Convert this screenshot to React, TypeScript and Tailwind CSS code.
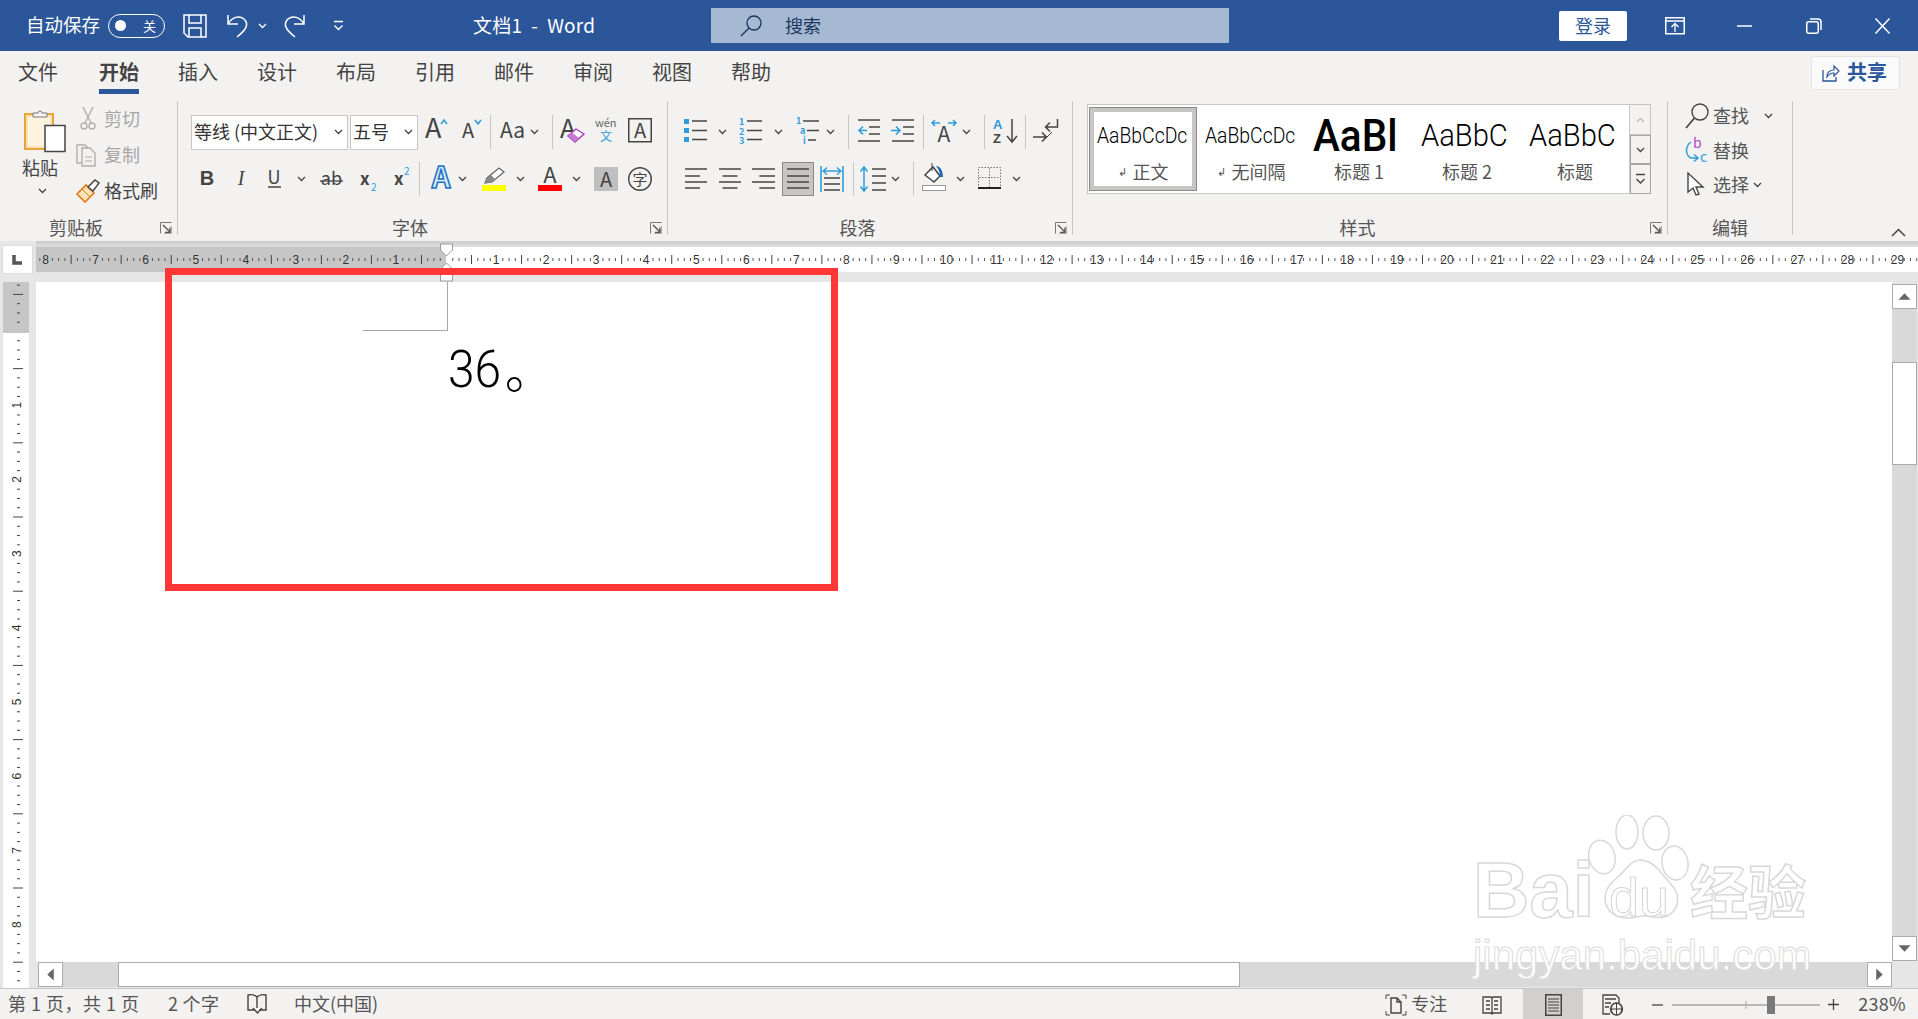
import React from "react";

const D = "#444444";
const B = "#2e9cdb";

const S = ({ w, h = 36, c = "", children }: any) => (
  <svg width={w} height={h} viewBox={`0 0 ${w} ${h}`} fill="none" className={`block shrink-0 overflow-visible ${c}`}>
    {children}
  </svg>
);
const T = ({ x = 0, y, s, f = D, a, b, i, fam, children, st, sw }: any) => (
  <text x={x} y={y} fontSize={s} fill={f} textAnchor={a} fontWeight={b ? 700 : 400} fontStyle={i ? "italic" : undefined} fontFamily={fam} stroke={st} strokeWidth={sw}>
    {children}
  </text>
);
const L = ({ x1, y1, x2, y2, c = D, w = 1.5 }: any) => <line x1={x1} y1={y1} x2={x2} y2={y2} stroke={c} strokeWidth={w} />;
const Chev = ({ c = "", col = D }: any) => (
  <S w={9} h={6} c={c}>
    <polyline points="1,1 4.5,4.5 8,1" stroke={col} strokeWidth="1.3" />
  </S>
);
const Sep = ({ c }: any) => <div className={`w-px h-[34px] bg-[#c8c6c4] shrink-0 ${c}`} />;
const Launcher = () => (
  <S w={12} h={12}>
    <path d="M.5 11.5V.5h11" stroke="#777" />
    <path d="M3 3l7 7M10 5.5V10.5H5" stroke="#555" strokeWidth="1.4" />
    <path d="M11.5 4v7.5H4" stroke="#aaa" />
  </S>
);

function Group({ w, label, launcher = true, children }: any) {
  return (
    <div className={`${w} h-[134px] shrink-0 border-r border-[#c8c6c4] flex flex-col`}>
      <div className="h-[120px]">{children}</div>
      <div className="h-[14px] flex items-center">
        <div className="flex-1 text-center text-[18px] text-[#555] pb-[3px]">{label}</div>
        {launcher ? (
          <div className="w-[25px] pl-[8px]">
            <Launcher />
          </div>
        ) : null}
      </div>
    </div>
  );
}

const Row = ({ c = "", children }: any) => <div className={`h-[36px] flex items-center ${c}`}>{children}</div>;

const Align = ({ w = 22, mode, c = "" }: any) => {
  const ys = [8, 15, 21, 27];
  return (
    <S w={w} c={c}>
      {ys.map((y, i) => {
        const long = i % 2 === 0 || mode === "j";
        const len = long ? w : w * 0.68;
        const x1 = mode === "c" ? (w - len) / 2 : mode === "r" ? w - len : 0;
        return <L key={y} x1={x1} y1={y} x2={x1 + len} y2={y} />;
      })}
    </S>
  );
};

function Ruler() {
  const o = 410;
  const u = 50.05;
  const items: any[] = [];
  for (let i = -9; i < 30; i++) {
    const x0 = o + i * u;
    if (i !== 0 && i >= -8) {
      items.push(
        <text key={`n${i}`} x={x0} y={17} fontSize="12" fill="#333" textAnchor="middle" fontFamily="'Liberation Sans',sans-serif">
          {Math.abs(i)}
        </text>
      );
    }
    for (let k = 1; k < 8; k++) {
      const x = x0 + (k * u) / 8;
      if (x < 2) continue;
      if (k === 4) items.push(<rect key={`l${i}${k}`} x={x} y={8} width="1" height="9" fill="#444" />);
      else items.push(<rect key={`d${i}${k}`} x={x} y={11} width="1" height="3" fill="#555" />);
    }
  }
  return (
    <svg width={1882} height={25} viewBox="0 0 1882 25" className="block overflow-visible shrink-0">
      <rect width={410} height={25} fill="#c6c6c6" />
      <rect x={410} width={1472} height={25} fill="#ffffff" />
      {items}
      <path d="M404.5-3h12v6l-6 6-6-6z" fill="#fff" stroke="#999" />
      <path d="M410.5 16l6 6v4h-12v-4z" fill="#fff" stroke="#999" />
      <rect x="404.5" y="26" width="12" height="8" fill="#fff" stroke="#999" />
    </svg>
  );
}

function VRuler() {
  const o = 49;
  const u = 74.2;
  const items: any[] = [];
  for (let i = -1; i < 10; i++) {
    const y0 = o + i * u;
    if (i > 0) {
      items.push(
        <text key={`n${i}`} x={0} y={0} transform={`translate(21 ${y0}) rotate(-90)`} fontSize="12" fill="#333" textAnchor="middle" fontFamily="'Liberation Sans',sans-serif">
          {i}
        </text>
      );
    }
    for (let k = 1; k < 8; k++) {
      const y = y0 + (k * u) / 8;
      if (y < 0 || y > 706) continue;
      if (k === 4) items.push(<rect key={`l${i}${k}`} x={13} y={y} width="10" height="1" fill="#444" />);
      else items.push(<rect key={`d${i}${k}`} x={17} y={y} width="3" height="1" fill="#444" />);
    }
  }
  return (
    <svg width={36} height={706} viewBox="0 0 36 706" className="block shrink-0">
      <rect width={36} height={706} fill="#e6e6e6" />
      <rect x={3} y={0} width={26} height={51} fill="#c6c6c6" />
      <rect x={3} y={51} width={26} height={655} fill="#fff" />
      {items}
    </svg>
  );
}

const Arrow = ({ d }: any) => {
  const p = d === "u" ? "6,16 12.5,9 19,16" : d === "d" ? "6,9 12.5,16 19,9" : d === "l" ? "16,6 9,12.5 16,19" : "9,6 16,12.5 9,19";
  return (
    <div className="w-[25px] h-[25px] shrink-0 bg-white border border-[#ababab]">
      <svg width={23} height={23} viewBox="0 0 25 25" className="block">
        <polygon points={p} fill="#666" />
      </svg>
    </div>
  );
};

const Item = ({ text, label, arrow, c }: any) => (
  <div className="w-[108px] h-[84px] shrink-0 flex flex-col items-center">
    <div className="w-[92px] h-[57px] overflow-hidden flex items-center whitespace-nowrap">
      <span className={`block origin-left text-black font-['Roboto',sans-serif] ${c}`}>{text}</span>
    </div>
    <div className="text-[18px] text-[#555] flex items-center -mt-[2px]">
      {arrow ? <span className="text-[11px] mr-[6px]">↲</span> : null}
      {label}
    </div>
  </div>
);

export default function App() {
  return (
    <div className="relative w-[1918px] h-[1019px] overflow-hidden flex flex-col bg-[#f3f2f1] leading-none font-['Noto_Sans_CJK_SC','Liberation_Sans',sans-serif]">
      {/* Title bar */}
      <div className="h-[51px] shrink-0 bg-[#2b579a] flex items-center text-white">
        <span className="ml-[26px] w-[74px] text-[18.500px] whitespace-nowrap pb-[3px]">自动保存</span>
        <div className="ml-[8px] w-[57px] h-[24px] rounded-full border border-white flex items-center justify-between pl-[6px] pr-[8px]">
          <span className="w-[11px] h-[11px] rounded-full bg-white" />
          <span className="text-[13px] pb-[1px]">关</span>
        </div>
        <S w={24} h={24} c="ml-[18px]">
          <path d="M1 1h22v22H5l-4-4z" stroke="#fff" strokeWidth="1.5" />
          <path d="M6 1v8h12V1M6 23v-9h12v9" stroke="#fff" strokeWidth="1.5" />
        </S>
        <S w={23} h={24} c="ml-[19px]">
          <path d="M2 1v9h10M2 10C6 3 13 1 18 5c5 5 3 10-7 18" stroke="#fff" strokeWidth="1.5" />
        </S>
        <Chev c="ml-[9px]" col="#fff" />
        <S w={22} h={24} c="ml-[17px]">
          <path d="M20 1v9H10M20 10C16 3 9 1 4 5c-5 5-3 10 7 18" stroke="#fff" strokeWidth="1.5" />
        </S>
        <S w={11} h={12} c="ml-[27px]">
          <path d="M1 1.5h9" stroke="#fff" strokeWidth="1.5" />
          <path d="M1.500 5.500l4 4 4-4" stroke="#fff" strokeWidth="1.4" />
        </S>
        <span className="ml-[129px] w-[122px] text-[19px] tracking-[.25px] whitespace-pre pb-[3px]">文档1  -  Word</span>
        <div className="ml-[116px] w-[518px] h-[35px] bg-[#a5b9d3] flex items-center text-[#1c3660]">
          <S w={22} h={22} c="ml-[29px]">
            <circle cx="14" cy="8" r="7" stroke="#1c3660" strokeWidth="1.3" />
            <path d="M9 13L1 21" stroke="#1c3660" strokeWidth="1.5" />
          </S>
          <span className="ml-[23px] text-[18px] pb-[2px]">搜索</span>
        </div>
        <div className="ml-[330px] w-[68px] h-[30px] bg-white rounded-[2px] flex items-center justify-center text-[#2b579a] text-[18px] pb-[2px]">登录</div>
        <S w={20} h={18} c="ml-[38px]">
          <rect x=".75" y=".75" width="18.5" height="16" stroke="#fff" strokeWidth="1.5" />
          <path d="M1 4h18" stroke="#fff" strokeWidth="1.5" />
          <path d="M10 15V7M6.5 10L10 6.5l3.500 3.500" stroke="#fff" strokeWidth="1.3" />
        </S>
        <S w={15} h={4} c="ml-[52px]">
          <path d="M0 2h15" stroke="#fff" strokeWidth="1.5" />
        </S>
        <S w={16} h={16} c="ml-[54px]">
          <rect x=".75" y="3.750" width="11.500" height="11.500" rx="2" stroke="#fff" strokeWidth="1.5" />
          <path d="M4 1h8a3 3 0 0 1 3 3v8" stroke="#fff" strokeWidth="1.5" />
        </S>
        <S w={15} h={16} c="ml-[53px]">
          <path d="M.5.500l14 15M14.500.500l-14 15" stroke="#fff" strokeWidth="1.5" />
        </S>
      </div>

      {/* Tabs */}
      <div className="h-[44px] shrink-0 flex items-center pl-[18px] gap-[39px] text-[20px] text-[#444]">
        <span className="w-[42px] pb-[2px]">文件</span>
        <span className="w-[40px] relative font-bold pb-[2px]">
          开始
          <span className="absolute left-0 right-0 top-[27px] h-[5px] bg-[#2b579a]" />
        </span>
        <span className="w-[40px] pb-[2px]">插入</span>
        <span className="w-[40px] pb-[2px]">设计</span>
        <span className="w-[40px] pb-[2px]">布局</span>
        <span className="w-[40px] pb-[2px]">引用</span>
        <span className="w-[40px] pb-[2px]">邮件</span>
        <span className="w-[40px] pb-[2px]">审阅</span>
        <span className="w-[40px] pb-[2px]">视图</span>
        <span className="w-[40px] pb-[2px]">帮助</span>
        <div className="ml-auto mr-[18px] w-[89px] h-[34px] bg-[#fafafa] border border-[#e3e3e3] rounded-[2px] flex items-center text-[#2b579a] font-bold text-[20px]">
          <S w={17} h={18} c="ml-[10px] mr-[8px]">
            <path d="M1 6v11h13v-4" stroke="#2b579a" strokeWidth="1.3" />
            <path d="M5 13c0-5 3-7 7-7V2l5 5-5 5V9c-3 0-5 1-7 4z" stroke="#2b579a" strokeWidth="1.2" />
          </S>
          <span className="pb-[2px]">共享</span>
        </div>
      </div>

      {/* Ribbon */}
      <div className="h-[146px] shrink-0 pt-[6px] flex">
        <Group w="w-[178px]" label="剪贴板">
          <div className="flex">
            <div className="ml-[22px] w-[44px] flex flex-col items-start">
              <S w={44} h={44} c="mt-[7px]">
                <path d="M3 6h28v35H3z" fill="#fbe3b8" stroke="#e8a33d" strokeWidth="2" />
                <path d="M6 9h22v29H6z" fill="#fdf3df" />
                <path d="M11 5h5a2 2 0 0 1 4 0h5v4H11z" fill="#f3f2f1" stroke="#777" />
                <rect x="23" y="17.500" width="20" height="26" fill="#fff" stroke="#444" strokeWidth="1.5" />
              </S>
              <span className="mt-[6px] w-[36px] text-[18px] text-[#444] whitespace-nowrap">粘贴</span>
              <Chev c="mt-[12px] ml-[16px]" />
            </div>
            <div className="ml-[10px] pt-[3px] flex flex-col gap-[6px]">
              <div className="h-[30px] flex items-center">
                <S w={26} h={26}>
                  <path d="M7 1l8 16M17 1L9 17" stroke="#b0b0b0" strokeWidth="1.4" />
                  <circle cx="8" cy="20" r="3" stroke="#b0b0b0" strokeWidth="1.4" />
                  <circle cx="16" cy="20" r="3" stroke="#b0b0b0" strokeWidth="1.4" />
                </S>
                <span className="ml-[2px] text-[18px] text-[#a6a6a6] pb-[2px]">剪切</span>
              </div>
              <div className="h-[30px] flex items-center">
                <S w={26} h={24}>
                  <path d="M6 20H1V2h8l3 3" stroke="#b0b0b0" strokeWidth="1.4" />
                  <path d="M6 5h8l5 5v13H6z" stroke="#b0b0b0" strokeWidth="1.4" />
                  <path d="M9 14h7M9 18h7" stroke="#b0b0b0" />
                </S>
                <span className="ml-[2px] text-[18px] text-[#a6a6a6] pb-[2px]">复制</span>
              </div>
              <div className="h-[30px] flex items-center">
                <S w={26} h={24}>
                  <path d="M1 15l9-9 8 8-9 9z" fill="#fbe3b8" stroke="#e07b1a" strokeWidth="1.6" />
                  <path d="M6 10l8 8M4 18l3 3" stroke="#e07b1a" />
                  <path d="M12 8l7-7 4 3-6 8z" fill="#fff" stroke="#444" strokeWidth="1.5" />
                </S>
                <span className="ml-[2px] text-[18px] text-[#444] pb-[2px]">格式刷</span>
              </div>
            </div>
          </div>
        </Group>

        <Group w="w-[490px]" label="字体">
          <Row c="mt-[13px]">
            <div className="ml-[13px] w-[157px] h-[35px] bg-white border border-[#c8c6c4] flex items-center pl-[2px] text-[18px] text-[#333] whitespace-nowrap">
              <span className="pb-[2px]">等线 (中文正文)</span>
              <Chev c="ml-auto mr-[4px]" />
            </div>
            <div className="ml-[2px] w-[68px] h-[35px] bg-white border border-[#c8c6c4] flex items-center pl-[2px] text-[18px] text-[#333]">
              <span className="pb-[2px]">五号</span>
              <Chev c="ml-auto mr-[4px]" />
            </div>
            <S w={23} c="ml-[7px]">
              <T y={24} s={27}>A</T>
              <polyline points="16,10 19,6 22,10" stroke={B} strokeWidth="1.6" />
            </S>
            <S w={20} c="ml-[14px]">
              <T y={24} s={20}>A</T>
              <polyline points="13,6 16,10 19,6" stroke={B} strokeWidth="1.6" />
            </S>
            <Sep c="ml-[8px]" />
            <S w={30} c="ml-[9px]">
              <T y={24} s={21}>Aa</T>
            </S>
            <Chev />
            <Sep c="ml-[13px]" />
            <S w={25} c="ml-[7px]">
              <T y={24} s={26}>A</T>
              <polygon points="8,22 16,15 24,20 15,28" fill="#fff" stroke="#a33db5" strokeWidth="1.4" />
              <polygon points="8,22 12,18.500 19,24 15,28" fill="#c77ad6" />
            </S>
            <S w={22} c="ml-[10px]">
              <T y={13} s={11} f="#666">wén</T>
              <T x={5} y={27} s={12} f={B}>文</T>
            </S>
            <S w={24} c="ml-[11px]">
              <rect x=".75" y="4.750" width="22.500" height="23" stroke={D} strokeWidth="1.5" />
              <T x={12} y={24} s={20} a="middle">A</T>
            </S>
          </Row>
          <Row c="mt-[11px]">
            <S w={24} c="ml-[17px]">
              <T x={12} y={24} s={20} b a="middle" fam="'Liberation Sans',sans-serif">B</T>
            </S>
            <S w={24} c="ml-[10px]">
              <T x={12} y={24} s={20} i a="middle" fam="'Liberation Serif',serif">I</T>
            </S>
            <S w={24} c="ml-[9px]">
              <T x={12} y={23} s={18} a="middle">U</T>
              <L x1={6} y1={26} x2={19} y2={26} />
            </S>
            <Chev c="ml-[11px]" />
            <S w={23} c="ml-[14px]">
              <T x={11.500} y={24} s={18} a="middle">ab</T>
              <L x1={0} y1={20} x2={23} y2={20} w={1.3} />
            </S>
            <S w={16} c="ml-[17px]">
              <T y={24} s={17} b>x</T>
              <T x={11} y={30} s={10} f={B}>2</T>
            </S>
            <S w={16} c="ml-[18px]">
              <T y={24} s={17} b>x</T>
              <T x={10} y={14} s={10} f={B}>2</T>
            </S>
            <Sep c="ml-[9px]" />
            <S w={22} c="ml-[10px]">
              <T x={11} y={27} s={29} b a="middle" f="#d6ebfb" st="#2070c0" sw={1.5}>A</T>
            </S>
            <Chev c="ml-[6px]" />
            <S w={24} c="ml-[15px]">
              <polygon points="3,22 5,17 17,7 22,11 10,21" fill="#fff" stroke="#666" strokeWidth="1.3" />
              <polygon points="3,22 5,17 9,14 13,18 10,21" fill="#888" />
              <rect y={24} width={24} height={6} fill="#ffff00" />
            </S>
            <Chev c="ml-[10px]" />
            <S w={24} c="ml-[13px]">
              <T x={12} y={22} s={22} a="middle">A</T>
              <rect y={24} width={24} height={6} fill="#ff0000" />
            </S>
            <Chev c="ml-[10px]" />
            <S w={24} c="ml-[13px]">
              <rect y={6} width={24} height={24} fill="#bfbfbf" />
              <T x={12} y={26} s={20} a="middle">A</T>
            </S>
            <S w={24} c="ml-[10px]">
              <circle cx="12" cy="18" r="11.300" stroke={D} strokeWidth="1.4" />
              <T x={12} y={23.500} s={15} a="middle">字</T>
            </S>
          </Row>
        </Group>

        <Group w="w-[405px]" label="段落">
          <Row c="mt-[13px]">
            <S w={23} c="ml-[16px]">
              {[5, 14, 23].map((y) => (
                <rect key={y} y={y} width={5} height={5} fill={B} />
              ))}
              {[7, 16.5, 25.5].map((y) => (
                <L key={y} x1={8} y1={y} x2={23} y2={y} />
              ))}
            </S>
            <Chev c="ml-[11px]" />
            <S w={23} c="ml-[12px]">
              {["1", "2", "3"].map((t, i) => (
                <T key={t} x={0} y={11 + i * 9.500} s={9} b f={B}>{t}</T>
              ))}
              {[7, 16.5, 25.5].map((y) => (
                <L key={y} x1={8} y1={y} x2={23} y2={y} />
              ))}
            </S>
            <Chev c="ml-[12px]" />
            <S w={24} c="ml-[13px]">
              <T x={0} y={10} s={9} b f={B}>1</T>
              <T x={4} y={20} s={9} b f={B}>a</T>
              <T x={7} y={30} s={9} b f={B}>i</T>
              <L x1={7} y1={7} x2={23} y2={7} />
              <L x1={11} y1={16.500} x2={23} y2={16.500} />
              <L x1={12} y1={26} x2={20} y2={26} />
            </S>
            <Chev c="ml-[6px]" />
            <Sep c="ml-[13px]" />
            <S w={22} c="ml-[9px]">
              <L x1={0} y1={6} x2={22} y2={6} />
              <L x1={11} y1={13} x2={22} y2={13} />
              <L x1={11} y1={20} x2={22} y2={20} />
              <L x1={0} y1={27} x2={22} y2={27} />
              <path d="M9 16.500H1M5 12.500l-4 4 4 4" stroke={B} strokeWidth="1.6" />
            </S>
            <S w={23} c="ml-[11px]">
              <L x1={1} y1={6} x2={23} y2={6} />
              <L x1={12} y1={13} x2={23} y2={13} />
              <L x1={12} y1={20} x2={23} y2={20} />
              <L x1={1} y1={27} x2={23} y2={27} />
              <path d="M0 16.500h9M5 12.500l4 4-4 4" stroke={B} strokeWidth="1.6" />
            </S>
            <Sep c="ml-[9px]" />
            <S w={24} c="ml-[8px]">
              <T x={12} y={28} s={21} a="middle">A</T>
              <path d="M0 9h8M3 6L0 9l3 3M24 9h-8M21 6l3 3-3 3" stroke={B} strokeWidth="1.5" />
            </S>
            <Chev c="ml-[6px]" />
            <Sep c="ml-[13px]" />
            <S w={25} c="ml-[8px]">
              <T x={0} y={15} s={13} b f={B} fam="'Liberation Sans',sans-serif">A</T>
              <T x={0} y={29} s={13} b fam="'Liberation Sans',sans-serif">Z</T>
              <path d="M19 5v23M14 22l5 6 5-6" stroke={D} strokeWidth="1.5" />
            </S>
            <Sep c="ml-[7px]" />
            <S w={25} c="ml-[7px]">
              <path d="M0 23h13M9 18.500l4.500 4.500-4.500 4.500" stroke={D} strokeWidth="1.5" />
              <path d="M24.500 5v8H13M17 8.500L12.500 13l4.500 4.500" stroke={D} strokeWidth="1.5" />
              <path d="M14 23l5-5" stroke={D} />
            </S>
          </Row>
          <Row c="mt-[11px]">
            <Align mode="l" c="ml-[17px]" />
            <Align mode="c" c="ml-[12px]" />
            <Align w={23} mode="r" c="ml-[11px]" />
            <div className="ml-[7px] w-[32px] h-[34px] bg-[#c8c6c4] border border-[#8a8a8a] flex items-center justify-center">
              <Align mode="j" />
            </div>
            <S w={24} c="ml-[6px]">
              <path d="M1 5v26M23 5v26" stroke={B} strokeWidth="1.6" />
              <path d="M3 10h18M7 6.500L3 10l4 3.500M17 6.500l4 3.500-4 3.500" stroke={B} strokeWidth="1.4" />
              <path d="M4 17h16M4 23h16M4 29h16" stroke={D} strokeWidth="1.5" />
            </S>
            <Sep c="ml-[9px]" />
            <S w={26} c="ml-[6px]">
              <path d="M4 7v22M.5 10.500L4 6l3.500 4.500M.5 25.500L4 30l3.500-4.500" stroke={B} strokeWidth="1.5" />
              <path d="M12 8h14M12 15h14M12 22h14M12 29h14" stroke={D} strokeWidth="1.5" />
            </S>
            <Chev c="ml-[5px]" />
            <Sep c="ml-[13px]" />
            <S w={24} c="ml-[8px]">
              <path d="M3 14l8-8 7 9-6 6z" fill="#fff" stroke={D} strokeWidth="1.5" />
              <path d="M10 2v8" stroke={D} />
              <path d="M14 5c4 0 7 4 7 11h-3c0-4-1-7-4-11z" fill="#1f6fb5" />
              <rect x=".5" y="24.500" width="23" height="5" fill="#fff" stroke="#999" />
            </S>
            <Chev c="ml-[10px]" />
            <S w={23} c="ml-[13px]">
              <rect x=".5" y="6.500" width="22" height="20" stroke="#777" strokeDasharray="1.5 1.5" />
              <path d="M11.500 7v20M1 16.500h21" stroke="#777" strokeDasharray="1.5 1.5" />
              <path d="M0 27h23" stroke="#222" strokeWidth="2" />
            </S>
            <Chev c="ml-[11px]" />
          </Row>
        </Group>

        <Group w="w-[595px]" label="样式">
          <div className="ml-[14px] mt-[3px] flex h-[90px] w-[564px]">
            <div className="w-[543px] h-[90px] bg-white border border-[#c8c6c4] flex items-start pl-[1px] pt-[2px]">
              <div className="w-[108px] h-[84px] shrink-0 bg-white border border-[#8a8a8a] outline-[4px] outline-[#c8c6c4] -outline-offset-[5px] flex flex-col items-center">
                <div className="w-[92px] h-[56px] overflow-hidden flex items-center whitespace-nowrap">
                  <span className="block origin-left scale-x-[.88] text-[22px] font-light text-black font-['Roboto',sans-serif]">AaBbCcDc</span>
                </div>
                <div className="text-[18px] text-[#555] flex items-center -mt-[2px]">
                  <span className="text-[11px] mr-[6px]">↲</span>正文
                </div>
              </div>
              <Item text="AaBbCcDc" label="无间隔" arrow c="scale-x-[.88] text-[22px] font-light" />
              <Item text="AaBl" label="标题 1" c="text-[44px] font-medium scale-x-[.92]" />
              <Item text="AaBbC" label="标题 2" c="text-[31px] font-light scale-x-[.94]" />
              <Item text="AaBbC" label="标题" c="text-[31px] font-light scale-x-[.94]" />
            </div>
            <div className="w-[22px] flex flex-col">
              <div className="h-[31px] border border-l-0 border-[#c8c6c4] flex items-center justify-center">
                <S w={9} h={6}>
                  <polyline points="1,5 4.500,1.500 8,5" stroke="#bbb" strokeWidth="1.3" />
                </S>
              </div>
              <div className="h-[29px] border border-[#a6a6a6] flex items-center justify-center">
                <Chev />
              </div>
              <div className="h-[30px] border border-[#a6a6a6] flex items-center justify-center">
                <S w={11} h={12}>
                  <path d="M1 1.500h9" stroke={D} strokeWidth="1.5" />
                  <path d="M1.500 6l4 4 4-4" stroke={D} strokeWidth="1.3" />
                </S>
              </div>
            </div>
          </div>
        </Group>

        <Group w="w-[125px]" label="编辑" launcher={false}>
          <div className="flex flex-col gap-[4.500px] pl-[17px] text-[18px] text-[#555]">
            <div className="h-[30px] flex items-center">
              <S w={24} h={30}>
                <circle cx="15" cy="11" r="8" stroke={D} strokeWidth="1.4" />
                <path d="M9.500 17L1 27" stroke={D} strokeWidth="1.7" />
              </S>
              <span className="ml-[4px] pb-[2px]">查找</span>
              <Chev c="ml-[15px]" />
            </div>
            <div className="h-[30px] flex items-center">
              <S w={24} h={30}>
                <T x={8} y={12} s={14} f="#b146c2">b</T>
                <T x={15} y={26} s={14} f={B}>c</T>
                <path d="M6 6C0 10 0 19 6 22h7M9 18.500l4 3.500-4 3.500" stroke={B} strokeWidth="1.5" />
              </S>
              <span className="ml-[4px] pb-[2px]">替换</span>
            </div>
            <div className="h-[30px] flex items-center">
              <S w={24} h={30}>
                <polygon points="3,3 3,22 8,18 11,25 14,24 11,17 18,17" fill="#fff" stroke={D} strokeWidth="1.4" />
              </S>
              <span className="ml-[4px] pb-[2px]">选择</span>
              <Chev c="ml-[4px]" />
            </div>
          </div>
        </Group>
        <div className="flex-1 flex items-end justify-end pr-[12px] pb-[4px]">
          <S w={15} h={9}>
            <polyline points="1,8 7.500,1.500 14,8" stroke={D} strokeWidth="1.5" />
          </S>
        </div>
      </div>

      {/* Horizontal ruler row */}
      <div className="h-[41px] shrink-0 bg-[#e6e6e6] flex">
        <div className="w-[36px] shrink-0 pt-[4px] pl-[2px]">
          <div className="w-[31px] h-[29px] bg-white border border-[#dcdcdc] flex items-center justify-center">
            <S w={11} h={11}>
              <path d="M2 1v8h8" stroke="#555" strokeWidth="3.500" />
            </S>
          </div>
        </div>
        <div className="flex-1 flex flex-col min-w-0">
          <div className="h-[6px] bg-gradient-to-b from-[#cbcbcb] to-[#dedede]" />
          <Ruler />
        </div>
      </div>

      {/* Main */}
      <div className="h-[706px] shrink-0 flex">
        <VRuler />
        <div className="flex-1 min-w-0 flex flex-col">
          <div className="h-[680px] flex">
            <div className="flex-1 bg-white">
              <div className="ml-[327px] w-[85px] h-[49px] border-r border-b border-[#a6a6a6]" />
              <div className="ml-[412px] mt-[13px] flex items-end h-[52px] text-black">
                <span className="block origin-left scale-x-[.92] text-[52px] font-light font-['Roboto',sans-serif]">36</span>
                <span className="mb-[4px] -ml-[1px] text-[49px] font-light font-['Noto_Sans_CJK_SC',sans-serif]">。</span>
              </div>
            </div>
            <div className="w-[26px] shrink-0 bg-[#e6e6e6] pt-[2px] flex flex-col">
              <Arrow d="u" />
              <div className="flex-1 w-[25px] bg-[#d9d9d9] pt-[53px]">
                <div className="h-[103px] bg-white border border-[#ababab]" />
              </div>
              <Arrow d="d" />
              <div className="h-[1px]" />
            </div>
          </div>
          <div className="h-[26px] bg-[#e6e6e6] flex pl-[2px] pr-[26px]">
            <div className="flex-1 h-[25px] flex bg-[#d9d9d9]">
              <Arrow d="l" />
              <div className="w-[55px] shrink-0" />
              <div className="w-[1122px] shrink-0 bg-white border border-[#ababab]" />
              <div className="flex-1" />
              <Arrow d="r" />
            </div>
          </div>
        </div>
      </div>

      {/* Status bar */}
      <div className="h-[32px] shrink-0 border-t border-[#c6c6c6] flex items-center justify-between text-[18px] text-[#555] whitespace-pre">
        <div className="flex items-center">
          <span className="ml-[8px] w-[132px] pb-[3px] tracking-[.5px]">第 1 页，共 1 页</span>
          <span className="ml-[28px] w-[52px] pb-[3px] tracking-[.3px]">2 个字</span>
          <S w={21} h={22} c="ml-[27px]">
            <path d="M10 3C8 1 4 0 1 1v15h7M10 3c2-2 6-3 9-2v15h-7M10 3v11" stroke={D} strokeWidth="1.4" />
            <path d="M6 14l4.500 5 4.500-5" stroke={D} strokeWidth="1.4" />
          </S>
          <span className="ml-[26px] pb-[3px]">中文(中国)</span>
        </div>
        <div className="flex items-center h-full pr-[12px]">
          <S w={22} h={22}>
            <path d="M1 5V1h4M21 5V1h-4M1 17v4h4M21 17v4h-4" stroke={D} />
            <path d="M6 4h6l4 4v11H6zM12 4v4h4" stroke={D} strokeWidth="1.4" />
          </S>
          <span className="ml-[4px] pb-[3px]">专注</span>
          <S w={20} h={20} c="ml-[35px]">
            <path d="M1 2h8l1 1 1-1h8v16h-8l-1 1-1-1H1zM10 3v15M4 6h4M4 10h4M4 14h4M12 6h4M12 10h4M12 14h4" stroke={D} strokeWidth="1.3" />
          </S>
          <div className="ml-[21px] w-[60px] h-full bg-[#d1d0ce] flex items-center justify-center">
            <S w={17} h={22}>
              <rect x=".75" y=".75" width="15.500" height="20.500" stroke={D} strokeWidth="1.5" />
              <path d="M3 5h11M3 8h11M3 11h11M3 14h11M3 17h11" stroke={D} />
            </S>
          </div>
          <S w={21} h={22} c="ml-[19px]">
            <path d="M8 20H1V1h13l3 3v5M3 5h11M3 9h6M3 13h4" stroke={D} strokeWidth="1.3" />
            <circle cx="14.500" cy="15" r="6" stroke={D} strokeWidth="1.3" fill="#f3f2f1" />
            <path d="M8.500 15h12M14.500 9v12M11 10c-2 3-2 7 0 10M18 10c2 3 2 7 0 10" stroke={D} />
          </S>
          <S w={11} h={4} c="ml-[29px]">
            <path d="M0 2h11" stroke={D} strokeWidth="1.3" />
          </S>
          <S w={148} h={18} c="ml-[9px]">
            <path d="M0 9h148" stroke="#a6a6a6" strokeWidth="1.5" />
            <path d="M74 5v8" stroke="#a6a6a6" />
            <rect x="95" y="0" width="8" height="18" fill="#7a7a7a" />
          </S>
          <S w={11} h={11} c="ml-[8px]">
            <path d="M0 5.500h11M5.500 0v11" stroke={D} strokeWidth="1.3" />
          </S>
          <span className="ml-[19px] pb-[3px] tracking-[.3px]">238%</span>
        </div>
      </div>

      {/* Red annotation */}
      <div className="absolute left-[165px] top-[268px] w-[673px] h-[323px] border-[7px] border-[#ff3636]" />

      {/* Baidu watermark */}
      <div className="absolute left-[1473px] top-[815px] w-[345px] h-[170px] text-white pointer-events-none font-['Liberation_Sans',sans-serif]">
        <span className="absolute left-0 top-[36px] text-[78px] font-bold [-webkit-text-stroke:1.5px_#d8d8d8]">Bai</span>
        <svg width={110} height={112} viewBox="0 0 110 112" className="absolute left-[113px] top-0" fill="#fff" stroke="#d8d8d8" strokeWidth="1.5">
          <ellipse cx="16" cy="42" rx="13" ry="17" transform="rotate(-15 16 42)" />
          <ellipse cx="41" cy="17" rx="11" ry="17" />
          <ellipse cx="70" cy="18" rx="13" ry="17" />
          <ellipse cx="89" cy="48" rx="13" ry="17" transform="rotate(-10 89 48)" />
          <path d="M54 45c-9 0-14 10-22 17-8 6-13 13-13 21 0 13 11 21 24 20 7 0 12-3 18-2 8 1 14 3 20 0 9-4 12-13 10-22-2-8-9-12-14-19-5-7-13-15-23-15z" />
        </svg>
        <span className="absolute left-[136px] top-[55px] text-[54px] font-light text-white [-webkit-text-stroke:1px_#d4d4d4]">du</span>
        <span className="absolute left-[217px] top-[45px] text-[58px] font-bold font-['Noto_Sans_CJK_SC',sans-serif] whitespace-nowrap [-webkit-text-stroke:1.5px_#d8d8d8]">经验</span>
        <span className="absolute left-0 top-[120px] text-[42px] whitespace-nowrap [-webkit-text-stroke:1px_#dcdcdc]">jingyan.baidu.com</span>
      </div>
    </div>
  );
}
